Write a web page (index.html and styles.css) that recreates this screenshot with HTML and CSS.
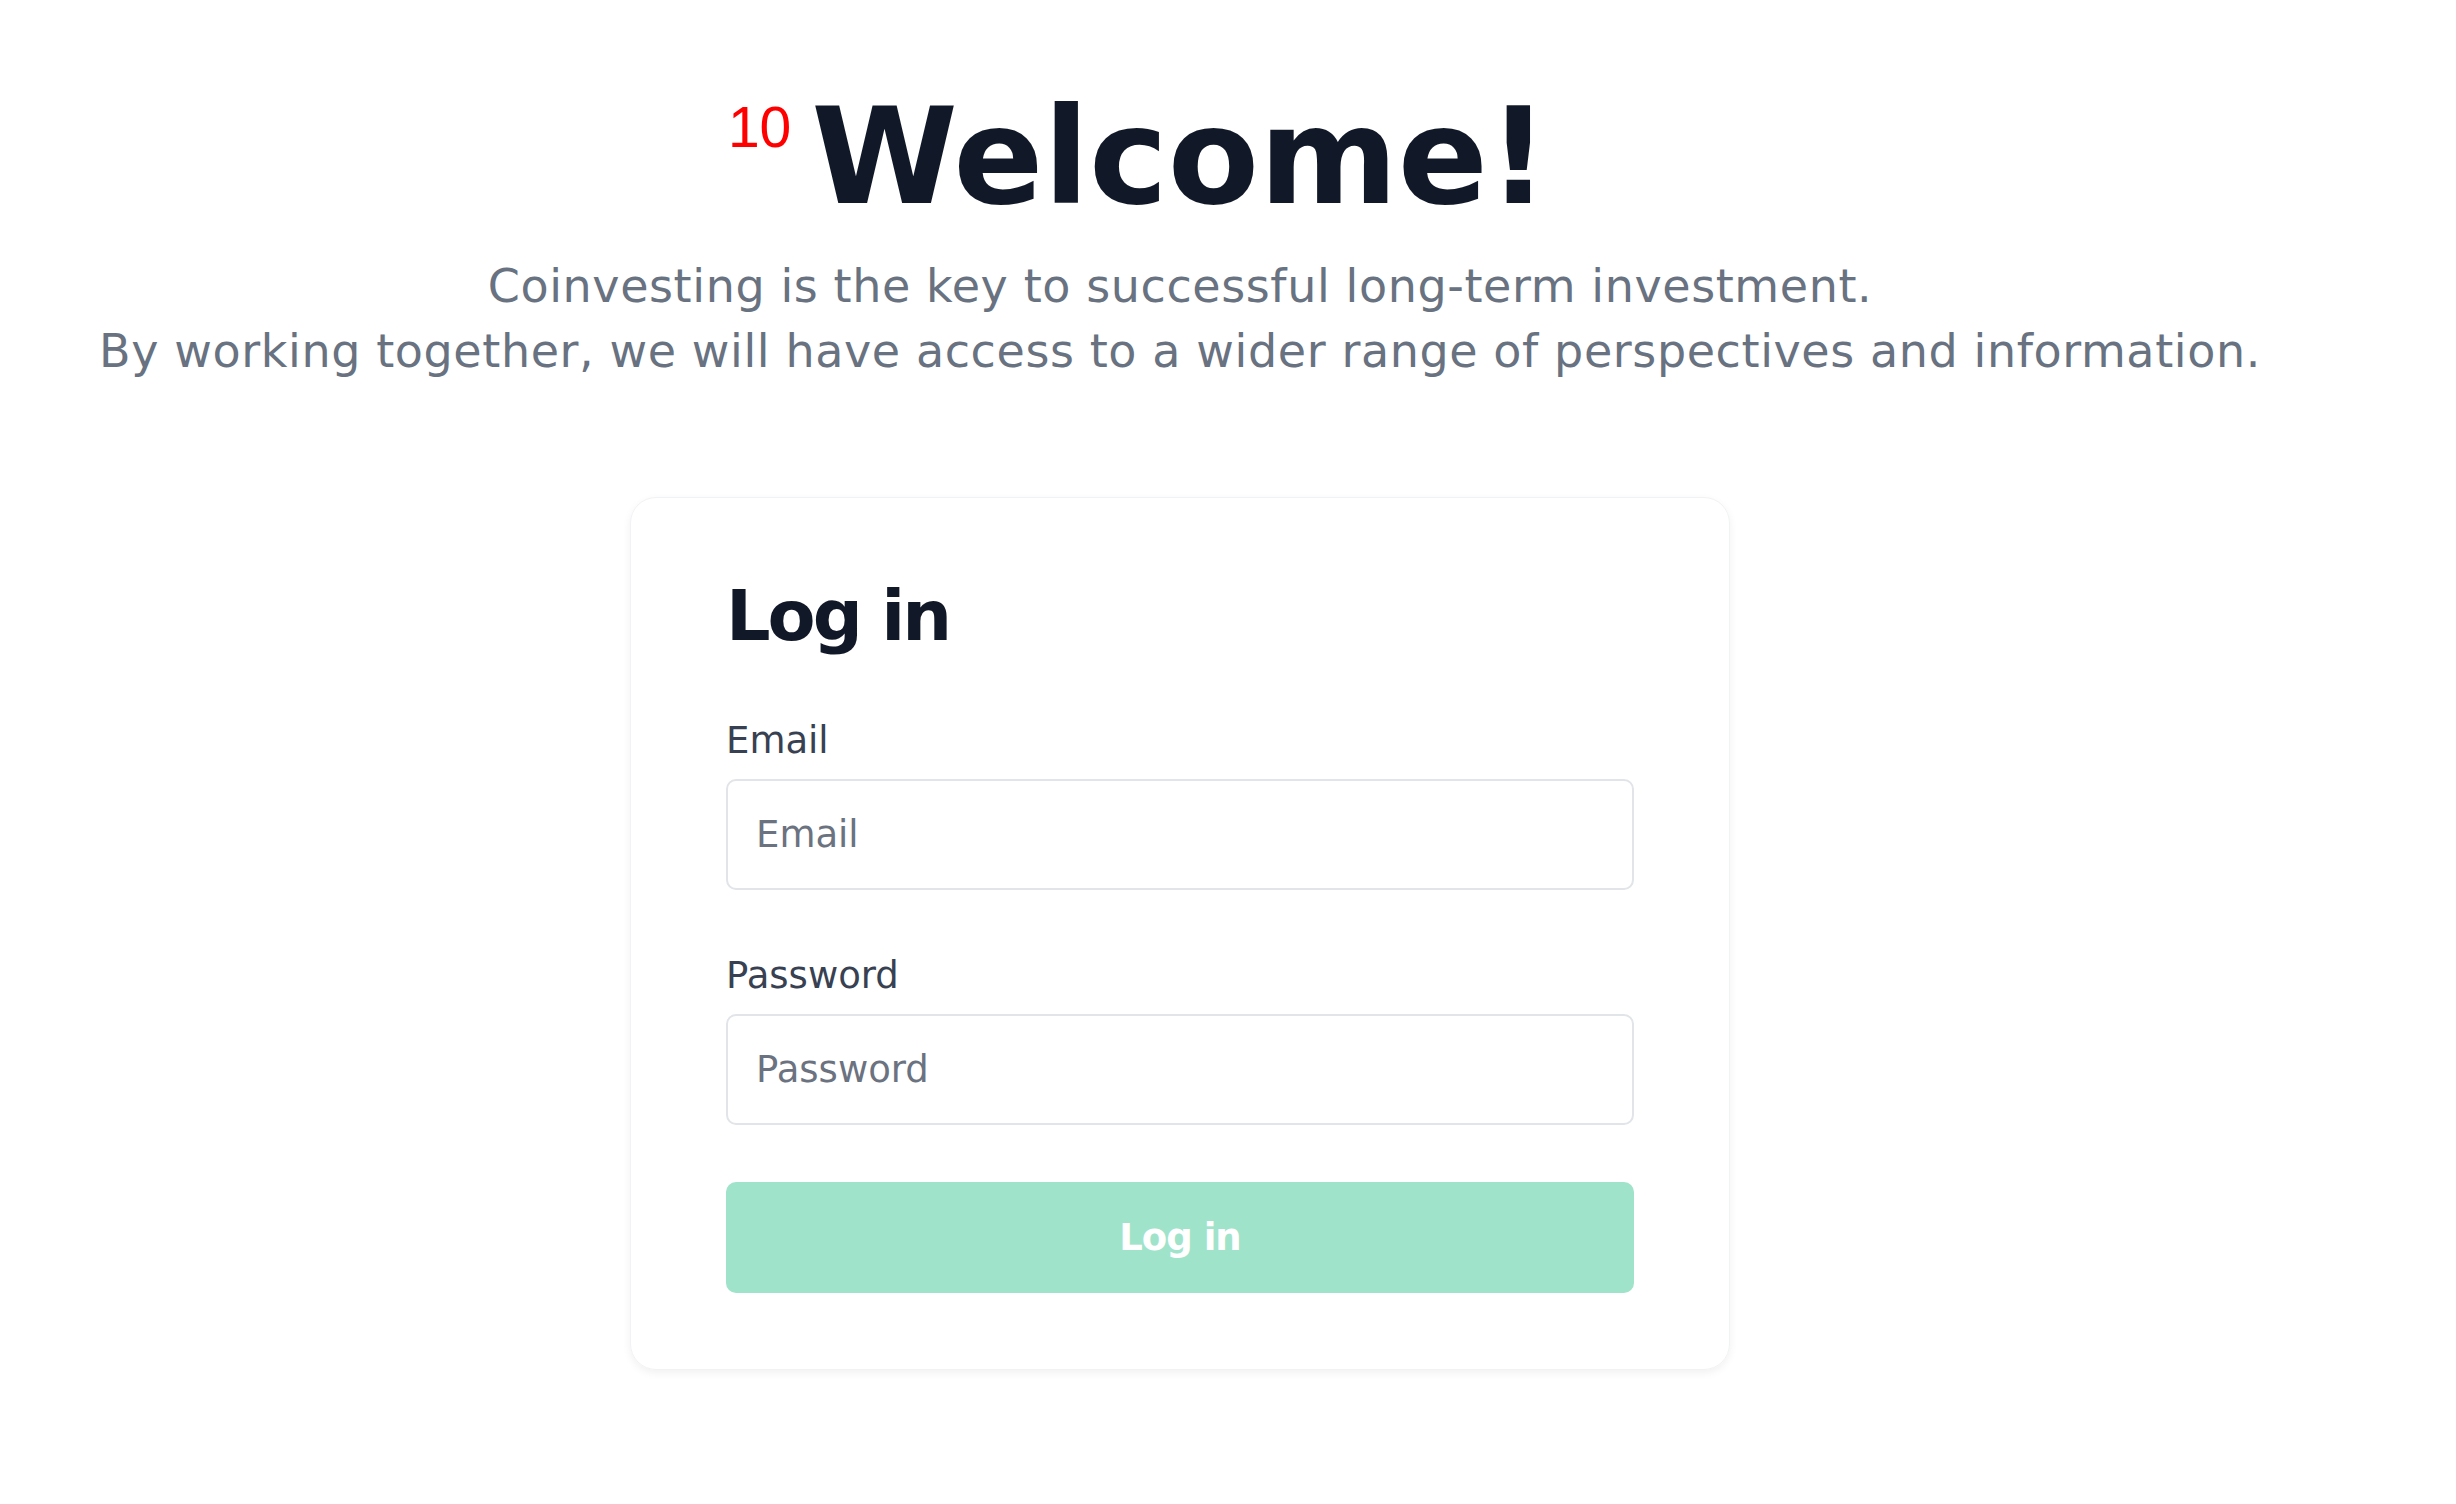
FILE: index.html
```html
<!DOCTYPE html>
<html lang="en">
<head>
    <meta charset="UTF-8">
    <meta name="viewport" content="width=device-width, initial-scale=1.0">
    <title>Coinvesting - Log in</title>
    <link rel="stylesheet" href="styles.css">
</head>
<body>
    <div class="page">
        <header class="hero">
            <h1 class="title"><span class="marker">10</span>Welcome!</h1>
            <p class="subtitle">
                Coinvesting is the key to successful long-term investment.<br>
                By working together, we will have access to a wider range of perspectives and information.
            </p>
        </header>

        <div class="card">
            <h2>Log in</h2>
            <form class="login-form">
                <div class="field">
                    <label for="email">Email</label>
                    <input type="email" id="email" placeholder="Email">
                </div>
                <div class="field">
                    <label for="password">Password</label>
                    <input type="password" id="password" placeholder="Password">
                </div>
                <button type="submit" disabled>Log in</button>
            </form>
        </div>
    </div>
</body>
</html>
```

FILE: styles.css
```css
body {
    font-family: "DejaVu Sans", sans-serif;
    margin: 0;
    background-color: #fff;
}

.page {
    width: 2360px;
    padding-top: 91px;
    padding-bottom: 60px;
}

.hero {
    text-align: center;
}

.title {
    position: relative;
    display: inline-block;
    margin: 0;
    font-size: 133px;
    line-height: 1;
    font-weight: bold;
    color: #111827;
}

/* little red counter sitting left of the heading */
.marker {
    position: absolute;
    right: calc(100% + 20px);
    top: 8px;
    font-family: "Liberation Sans", Arial, sans-serif;
    font-size: 57px;
    line-height: 1;
    font-weight: normal;
    color: #ff0000;
}

.subtitle {
    margin: 30px 0 0;
    font-size: 46px;
    line-height: 65px;
    letter-spacing: 0.6px;
    color: #687280;
}

.card {
    width: 908px;
    margin: 113px auto 0;
    padding: 76px 95px 76px;
    border: 1px solid #f1f2f4;
    border-radius: 26px;
    box-shadow: 0 3px 8px rgba(0, 0, 0, 0.06);
}

.card h2 {
    margin: 0 0 57px;
    font-size: 70px;
    line-height: 84px;
    font-weight: bold;
    letter-spacing: -3px;
    color: #111827;
}

.field + .field {
    margin-top: 60px;
}

.field label {
    display: block;
    margin-bottom: 12px;
    font-size: 37px;
    line-height: 52px;
    color: #374151;
}

.field input {
    display: block;
    box-sizing: border-box;
    width: 100%;
    height: 111px;
    padding: 0 28px;
    border: 2px solid #e1e4e8;
    border-radius: 10px;
    font-family: "DejaVu Sans", sans-serif;
    font-size: 37px;
    color: #111827;
    background-color: #fff;
}

.field input::placeholder {
    color: #6b7280;
}

button {
    display: block;
    width: 100%;
    height: 111px;
    margin-top: 57px;
    border: none;
    border-radius: 10px;
    background-color: #a0e3cb;
    color: #fff;
    font-family: "DejaVu Sans", sans-serif;
    font-size: 37px;
    font-weight: bold;
    letter-spacing: -1px;
    cursor: pointer;
}
```
